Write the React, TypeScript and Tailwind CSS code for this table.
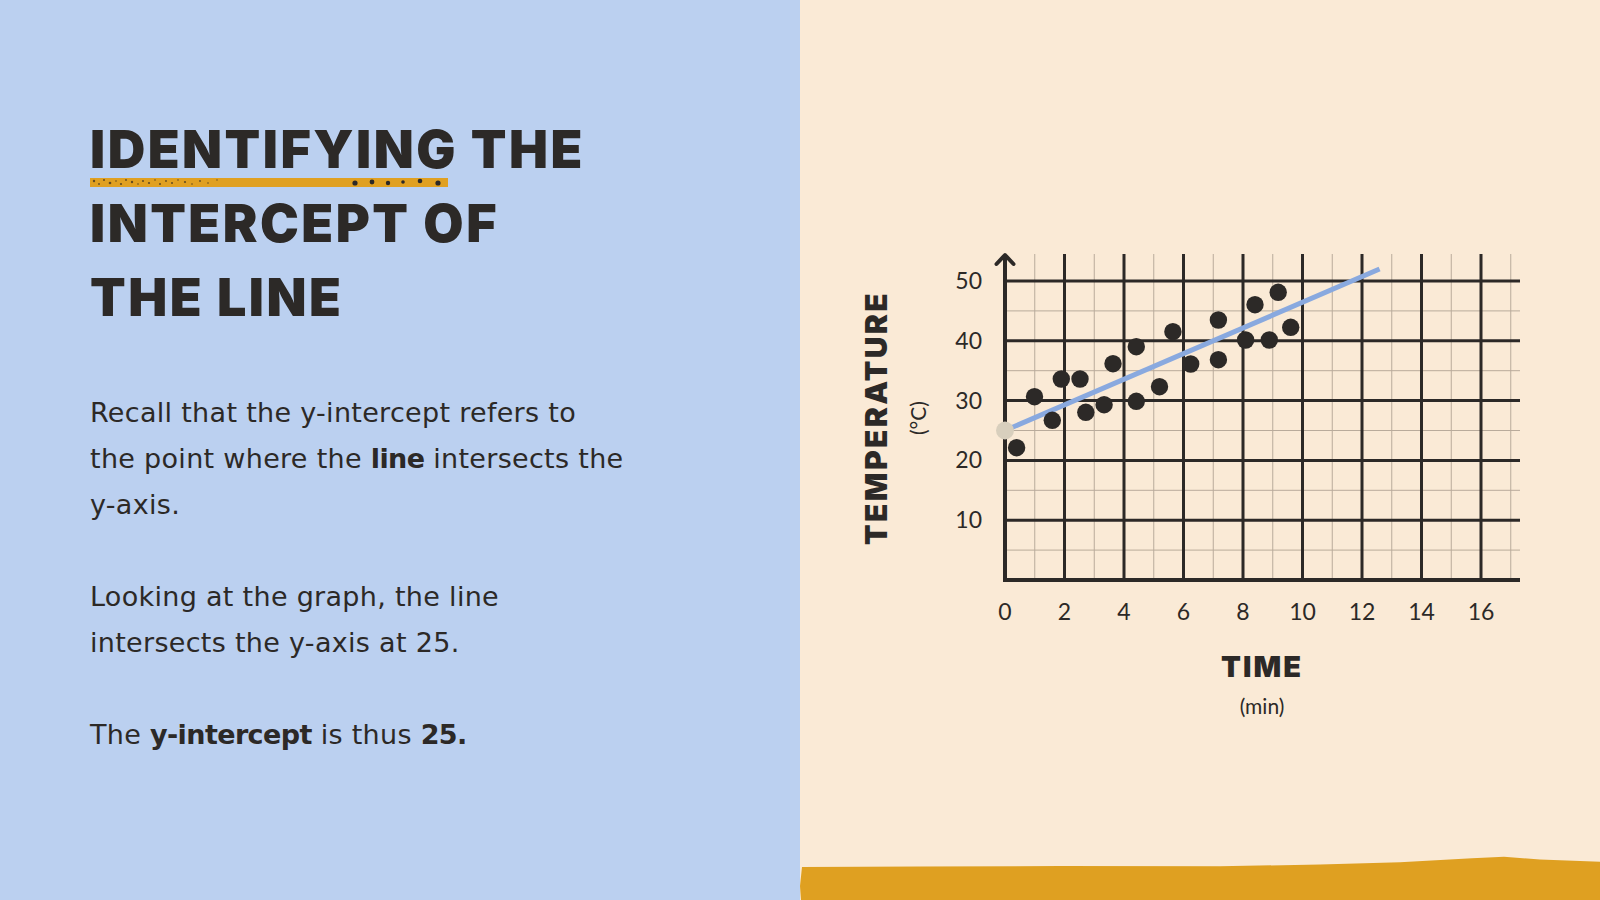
const INK = "#2c2927";

// data points in svg-local coords (already scaled)
const DOTS: [number, number][] = [
  [176.6, 207.7], [194.5, 156.7], [212.3, 180.3], [221.3, 139], [240, 139],
  [245.8, 172.3], [264.1, 164.7], [273, 123.7], [296.3, 106.7], [296.3, 161.3],
  [319.5, 146.7], [332.9, 91.7], [350.7, 124], [378.4, 80], [378.4, 119.7],
  [405.6, 100], [415, 64.7], [429.3, 100], [438.2, 52.3], [450.7, 87.3],
];

const OX = 165;
const OY = 340;
const UX = 29.75;
const UY = 5.98;
const TOP = 14;
const RIGHT = 680;

export default function App() {
  return (
    <div className="flex h-[900px] w-[1600px] overflow-hidden">
      <div className="w-[800px] shrink-0 bg-[#bbd0f0] pl-[90px] pt-[113px]" style={{ color: INK }}>
        <div className="relative">
          <h1 className="font-['Inter',sans-serif] text-[52px] font-black uppercase leading-[74px] tracking-[0.048em]">
            <span className="block">Identifying the</span>
            <span className="block">Intercept of</span>
            <span className="block">the line</span>
          </h1>
          <Underline />
        </div>

        <div className="mt-[55px] font-['DejaVu_Sans',sans-serif] text-[27px] leading-[46px] tracking-[0.3px]">
          <p>
            Recall that the y-intercept refers to
            <br />
            the point where the <b className="tracking-[-0.6px]">line</b> intersects the
            <br />
            y-axis.
          </p>
          <p className="mt-[46px]">
            Looking at the graph, the line
            <br />
            intersects the y-axis at 25.
          </p>
          <p className="mt-[46px]">
            The <b className="tracking-[-0.6px]">y-intercept</b> is thus <b className="tracking-[-0.6px]">25.</b>
          </p>
        </div>
      </div>

      <div className="flex flex-1 flex-col bg-[#faead6]">
        <div className="ml-[40px] mt-[240px]">
          <Chart />
        </div>
        <svg width="800" height="44" viewBox="0 0 800 44" className="mt-auto block">
          <polygon
            points="2,11 120,10.5 260,10 420,10.2 520,8.6 600,6.2 672,2.3 704,0.7 740,3.5 800,5.7 800,44 1,44 0,30"
            fill="#dfa021"
          />
        </svg>
      </div>
    </div>
  );
}

function Underline() {
  const specks: [number, number, number][] = [
    [4, 3, 1.2], [9, 6, 0.9], [14, 2, 1], [20, 5, 1.3], [26, 3, 0.8], [31, 6, 1.1], [36, 2, 0.9],
    [42, 4, 1.2], [48, 6, 0.8], [53, 3, 1], [59, 5, 1.1], [65, 2, 0.8], [70, 6, 1], [76, 3, 0.9],
    [82, 5, 1], [88, 2, 0.8], [95, 4, 1.1], [102, 6, 0.8], [110, 3, 0.9], [118, 5, 0.8], [127, 2, 0.7],
  ];
  const blobs: [number, number, number][] = [
    [265, 5, 2.6], [282, 4, 2.4], [298, 5, 2.2], [313, 4, 1.8], [330, 3, 2.3], [348, 5, 2.6],
  ];
  return (
    <svg width="358" height="9" viewBox="0 0 358 9" className="absolute left-0 top-[65px] block">
      <rect x="0" y="0" width="358" height="9" fill="#e0a021" />
      {specks.map(([x, y, r], i) => (
        <circle key={i} cx={x} cy={y} r={r} fill="#3a2f20" opacity="0.75" />
      ))}
      {blobs.map(([x, y, r], i) => (
        <circle key={i} cx={x} cy={y} r={r} fill={INK} />
      ))}
    </svg>
  );
}

function Chart() {
  const vThin = [1, 3, 5, 7, 9, 11, 13, 15, 17];
  const vThick = [2, 4, 6, 8, 10, 12, 14, 16];
  const hThin = [5, 15, 25, 35, 45];
  const hThick = [10, 20, 30, 40, 50];
  const lineEnd = { x: OX + 12.59 * UX, y: OY - 52 * UY };
  return (
    <svg width="720" height="480" viewBox="0 0 720 480" className="block">
      {/* thin grid */}
      {vThin.map((v) => (
        <line key={`vt${v}`} x1={OX + v * UX} y1={TOP} x2={OX + v * UX} y2={OY} stroke="#b9ab9b" strokeWidth="1" />
      ))}
      {hThin.map((v) => (
        <line key={`ht${v}`} x1={OX} y1={OY - v * UY} x2={RIGHT} y2={OY - v * UY} stroke="#b9ab9b" strokeWidth="1" />
      ))}
      {/* thick grid */}
      {vThick.map((v) => (
        <line key={`vk${v}`} x1={OX + v * UX} y1={TOP} x2={OX + v * UX} y2={OY} stroke={INK} strokeWidth="3" />
      ))}
      {hThick.map((v) => (
        <line key={`hk${v}`} x1={OX} y1={OY - v * UY} x2={RIGHT} y2={OY - v * UY} stroke={INK} strokeWidth="3" />
      ))}
      {/* axes */}
      <line x1={OX} y1={TOP + 1} x2={OX} y2={OY + 2} stroke={INK} strokeWidth="4" />
      <line x1={OX - 2} y1={OY} x2={RIGHT} y2={OY} stroke={INK} strokeWidth="4" />
      <polyline points={`${OX - 8.5},${TOP + 10} ${OX},${TOP + 1} ${OX + 8.5},${TOP + 10}`} fill="none" stroke={INK} strokeWidth="4" strokeLinecap="round" strokeLinejoin="round" />

      {/* tick labels */}
      <g fontFamily="Lato, sans-serif" fontSize="23" fill={INK}>
        {hThick.map((v) => (
          <text key={`yl${v}`} x={142} y={OY - v * UY + 8} textAnchor="end">{v}</text>
        ))}
        {[0, ...vThick].map((v) => (
          <text key={`xl${v}`} x={OX + v * UX} y={380} textAnchor="middle">{v}</text>
        ))}
      </g>

      {/* trend line */}
      <line x1={OX} y1={OY - 25 * UY} x2={lineEnd.x} y2={lineEnd.y} stroke="#89a9df" strokeWidth="5" />
      {DOTS.map(([x, y], i) => (
        <circle key={i} cx={x} cy={y} r="8.7" fill={INK} />
      ))}
      <circle cx={OX} cy={OY - 25 * UY} r="9" fill="#d8cfbd" />

      {/* axis titles */}
      <text x={36} y={178} transform="rotate(-90 36 178)" textAnchor="middle" dominantBaseline="central" fontFamily="Inter, sans-serif" fontWeight="900" fontSize="30" letterSpacing="2.4" fill={INK}>
        TEMPERATURE
      </text>
      <text x={77} y={178} transform="rotate(-90 77 178)" textAnchor="middle" dominantBaseline="central" fontFamily="Lato, sans-serif" fontSize="21" fill={INK}>
        (°C)
      </text>
      <text x={422} y={426} textAnchor="middle" dominantBaseline="central" fontFamily="Inter, sans-serif" fontWeight="900" fontSize="29" letterSpacing="2" fill={INK}>
        TIME
      </text>
      <text x={422} y={465} textAnchor="middle" dominantBaseline="central" fontFamily="Lato, sans-serif" fontSize="21" fill={INK}>
        (min)
      </text>
    </svg>
  );
}
